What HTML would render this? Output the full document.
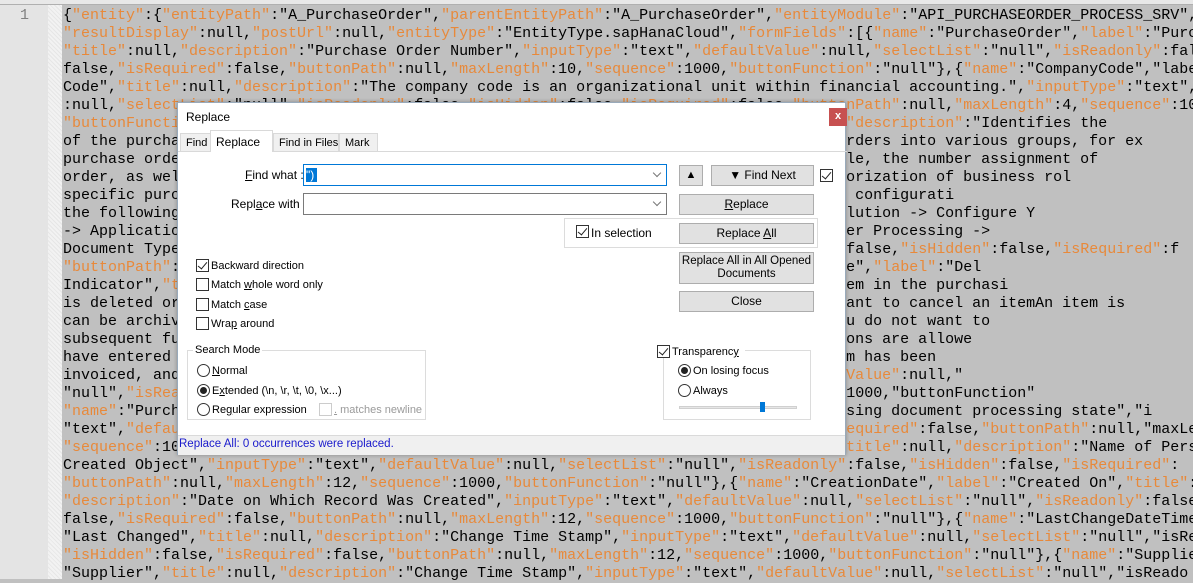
<!DOCTYPE html>
<html><head><meta charset="utf-8">
<style>
*{margin:0;padding:0;box-sizing:border-box}
body{width:1193px;height:579px;overflow:hidden;background:#c0c0c0;position:relative;font-family:"Liberation Sans",sans-serif}
#top{position:absolute;left:0;top:0;width:1193px;height:5px;background:#e8e8e8;border-bottom:1px solid #b0b0b0}
#gut{position:absolute;left:0;top:5px;width:48px;height:574px;background:#e4e4e4;color:#808080;font:15px "Liberation Mono",monospace}
#gut span{position:absolute;left:20px;top:2px}
#fold{position:absolute;left:48px;top:5px;width:14px;height:574px;background:repeating-linear-gradient(45deg,#f2f2f2 0 2px,#e6e6e6 2px 3px)}
#code{position:absolute;left:63px;top:7px;font:15px/18px "Liberation Mono",monospace;color:#000;white-space:pre}
.k{color:#e8893a}
#dlg{position:absolute;left:177px;top:102px;width:669px;height:353px;background:#fff;border:1px solid #9ab;box-shadow:0 0 4px rgba(0,0,0,.3);font-size:11px;color:#000}
.a{position:absolute}
.tab{position:absolute;top:30px;height:18px;background:#f0f0f0;border:1px solid #d9d9d9;border-bottom:none;padding:3px 5px;font-size:11px;white-space:nowrap}
.btn{position:absolute;background:#e1e1e1;border:1px solid #adadad;text-align:center;font-size:11px;line-height:19px}
.cb{position:absolute;width:13px;height:13px;border:1px solid #333;background:#fff}
.cb.c::after{content:"";position:absolute;left:3px;top:0px;width:4px;height:8px;border:solid #222;border-width:0 1.5px 1.5px 0;transform:rotate(40deg)}
.rb{position:absolute;width:13px;height:13px;border:1px solid #333;border-radius:50%;background:#fff}
.rb.c::after{content:"";position:absolute;left:2px;top:2px;width:7px;height:7px;border-radius:50%;background:#222}
.lbl{position:absolute;font-size:11px;white-space:nowrap}
.grp{position:absolute;border:1px solid #dcdcdc}
.combo{position:absolute;height:22px;border:1px solid #7a7a7a;background:#fff}
.combo::after{content:"";position:absolute;right:6px;top:5px;width:5px;height:5px;border:solid #777;border-width:0 1px 1px 0;transform:rotate(45deg)}
</style></head><body>
<div id="top"></div>
<div id="gut"><span>1</span></div>
<div id="fold"></div>
<div id="code">{"entity":{"entityPath":"A_PurchaseOrder","parentEntityPath":"A_PurchaseOrder","entityModule":"API_PURCHASEORDER_PROCESS_SRV",
"resultDisplay":null,"postUrl":null,"entityType":"EntityType.sapHanaCloud","formFields":[{"name":"PurchaseOrder","label":"Purc
"title":null,"description":"Purchase Order Number","inputType":"text","defaultValue":null,"selectList":"null","isReadonly":fal
false,"isRequired":false,"buttonPath":null,"maxLength":10,"sequence":1000,"buttonFunction":"null"},{"name":"CompanyCode","labe
Code","title":null,"description":"The company code is an organizational unit within financial accounting.","inputType":"text",
:null,"selectList":"null","isReadonly":false,"isHidden":false,"isRequired":false,"buttonPath":null,"maxLength":4,"sequence":10
"buttonFunction":"null"},{"name":"PurchaseOrderType","label":"Order Type","title":null,"description":"Identifies the
of the purchase order type. The purchase order type is used to differentiate purchase orders into various groups, for ex
purchase order types that control the processing of orders in the system and, for example, the number assignment of
order, as well as the document types used. You can use these types to restrict the authorization of business rol
specific purchase order types. For more information about purchase order types, see the configurati
the following path in the configuration activities (for administrators): Manage Your Solution -> Configure Y
-> Application Area: Sourcing and Procurement -> Purchasing Procurement -> Purchase Order Processing ->
Document Type","inputType":"text","defaultValue":null,"selectList":"null","isReadonly":false,"isHidden":false,"isRequired":f
"buttonPath":null,"maxLength":4,"sequence":1000},{"name":"PurchasingDocumentDeletionCode","label":"Del
Indicator","title":null,"description":"The deletion indicator determines whether the item in the purchasi
is deleted or blocked for subsequent functions. You set the deletion indicator if:You want to cancel an itemAn item is
can be archived and removed. Choose Purchase Order Item -> Blocking Edit -> Block if you do not want to
subsequent functions to be executed for the item any more. As soon as subsequent functions are allowe
have entered the item again, you can remove the deletion indicator.A purchase order item has been
invoiced, and the goods receipt has been posted completely","inputType":"text","defaultValue":null,"
"null","isReadonly":false,"isHidden":false,"isRequired":false,"maxLength":1,"sequence":1000,"buttonFunction"
"name":"PurchasingProcessingStatus","label":"Status","title":null,"description":"Purchasing document processing state","i
"text","defaultValue":null,"selectList":"null","isReadonly":false,"isHidden":false,"isRequired":false,"buttonPath":null,"maxLe
"sequence":1000,"buttonFunction":"null"},{"name":"CreatedByUser","label":"Created By","title":null,"description":"Name of Pers
Created Object","inputType":"text","defaultValue":null,"selectList":"null","isReadonly":false,"isHidden":false,"isRequired":
"buttonPath":null,"maxLength":12,"sequence":1000,"buttonFunction":"null"},{"name":"CreationDate","label":"Created On","title":
"description":"Date on Which Record Was Created","inputType":"text","defaultValue":null,"selectList":"null","isReadonly":false
false,"isRequired":false,"buttonPath":null,"maxLength":12,"sequence":1000,"buttonFunction":"null"},{"name":"LastChangeDateTime
"Last Changed","title":null,"description":"Change Time Stamp","inputType":"text","defaultValue":null,"selectList":"null","isRe
"isHidden":false,"isRequired":false,"buttonPath":null,"maxLength":12,"sequence":1000,"buttonFunction":"null"},{"name":"Supplie
"Supplier","title":null,"description":"Change Time Stamp","inputType":"text","defaultValue":null,"selectList":"null","isReado</div>

<div id="dlg">
  <div class="lbl" style="left:8px;top:7px;font-size:12px">Replace</div>
  <div class="a" style="left:651px;top:5px;width:18px;height:18px;background:#c75050;color:#fff;font-size:11px;text-align:center;line-height:17px;font-weight:bold">x</div>
  <div class="a" style="left:0;top:48px;width:669px;height:1px;background:#d9d9d9"></div>
  <div class="tab" style="left:2px;width:31px">Find</div>
  <div class="tab" style="left:32px;top:27px;height:22px;width:63px;background:#fff;padding-top:4px;font-size:12px">Replace</div>
  <div class="tab" style="left:95px;width:66px">Find in Files</div>
  <div class="tab" style="left:161px;width:39px">Mark</div>

  <div class="lbl" style="left:67px;top:65px;font-size:12px"><u>F</u>ind what :</div>
  <div class="combo" style="left:125px;top:61px;width:364px;border-color:#0078d7"><span class="a" style="left:2px;top:3px;height:14px;width:11px;background:#0078d7;color:#fff;font-size:12px;line-height:14px">")</span></div>
  <div class="lbl" style="left:53px;top:94px;font-size:12px">Repl<u>a</u>ce with :</div>
  <div class="combo" style="left:125px;top:90px;width:364px"></div>

  <div class="btn" style="left:501px;top:62px;width:24px;height:21px;font-size:11px">▲</div>
  <div class="btn" style="left:533px;top:62px;width:103px;height:21px;font-size:12px">▼ Find Next</div>
  <div class="cb c" style="left:642px;top:66px"></div>
  <div class="btn" style="left:501px;top:91px;width:135px;height:21px;font-size:12px"><u>R</u>eplace</div>
  <div class="grp" style="left:386px;top:115px;width:254px;height:30px"></div>
  <div class="cb c" style="left:398px;top:122px"></div>
  <div class="lbl" style="left:413px;top:123px;font-size:12px">In selection</div>
  <div class="btn" style="left:501px;top:120px;width:135px;height:21px;font-size:12px">Replace <u>A</u>ll</div>
  <div class="btn" style="left:501px;top:149px;width:135px;height:32px;line-height:13px;padding-top:2px;font-size:11.5px">Replace All in All Opened Documents</div>
  <div class="btn" style="left:501px;top:188px;width:135px;height:21px;font-size:12px">Close</div>

  <div class="cb c" style="left:18px;top:156px"></div><div class="lbl" style="left:33px;top:157px">Backward direction</div>
  <div class="cb" style="left:18px;top:175px"></div><div class="lbl" style="left:33px;top:176px">Match <u>w</u>hole word only</div>
  <div class="cb" style="left:18px;top:195px"></div><div class="lbl" style="left:33px;top:196px">Match <u>c</u>ase</div>
  <div class="cb" style="left:18px;top:214px"></div><div class="lbl" style="left:33px;top:215px">Wra<u>p</u> around</div>

  <div class="grp" style="left:9px;top:247px;width:239px;height:70px"></div>
  <div class="lbl" style="left:15px;top:241px;background:#fff;padding:0 2px">Search Mode</div>
  <div class="rb" style="left:19px;top:261px"></div><div class="lbl" style="left:34px;top:262px"><u>N</u>ormal</div>
  <div class="rb c" style="left:19px;top:281px"></div><div class="lbl" style="left:34px;top:282px">E<u>x</u>tended (\n, \r, \t, \0, \x...)</div>
  <div class="rb" style="left:19px;top:300px"></div><div class="lbl" style="left:34px;top:301px">Re<u>g</u>ular expression</div>
  <div class="cb" style="left:141px;top:300px;border-color:#ccc"></div><div class="lbl" style="left:156px;top:301px;color:#9a9a9a"><u>.</u> matches newline</div>

  <div class="grp" style="left:485px;top:247px;width:148px;height:70px"></div>
  <div class="a" style="left:479px;top:241px;width:88px;height:14px;background:#fff"></div>
  <div class="cb c" style="left:479px;top:242px"></div><div class="lbl" style="left:494px;top:243px">Transparenc<u>y</u></div>
  <div class="rb c" style="left:500px;top:261px"></div><div class="lbl" style="left:515px;top:262px">On losing focus</div>
  <div class="rb" style="left:500px;top:281px"></div><div class="lbl" style="left:515px;top:282px">Always</div>
  <div class="a" style="left:501px;top:303px;width:118px;height:3px;background:#e6e6e6;border:1px solid #d0d0d0"></div>
  <div class="a" style="left:582px;top:299px;width:5px;height:10px;background:#0078d7"></div>

  <div class="a" style="left:0;top:332px;width:667px;height:20px;background:#f0f0f0;border-top:1px solid #dadada"></div>
  <div class="lbl" style="left:1px;top:335px;color:#1a1acc;font-size:11.5px">Replace All: 0 occurrences were replaced.</div>
</div>
<script>
var c=document.getElementById('code');
c.innerHTML=c.textContent.replace(/&/g,'&amp;').replace(/</g,'&lt;').replace(/"[^"\n]*"(?=:)/g,function(m){return '<span class="k">'+m+'</span>';});
</script>
</body></html>
